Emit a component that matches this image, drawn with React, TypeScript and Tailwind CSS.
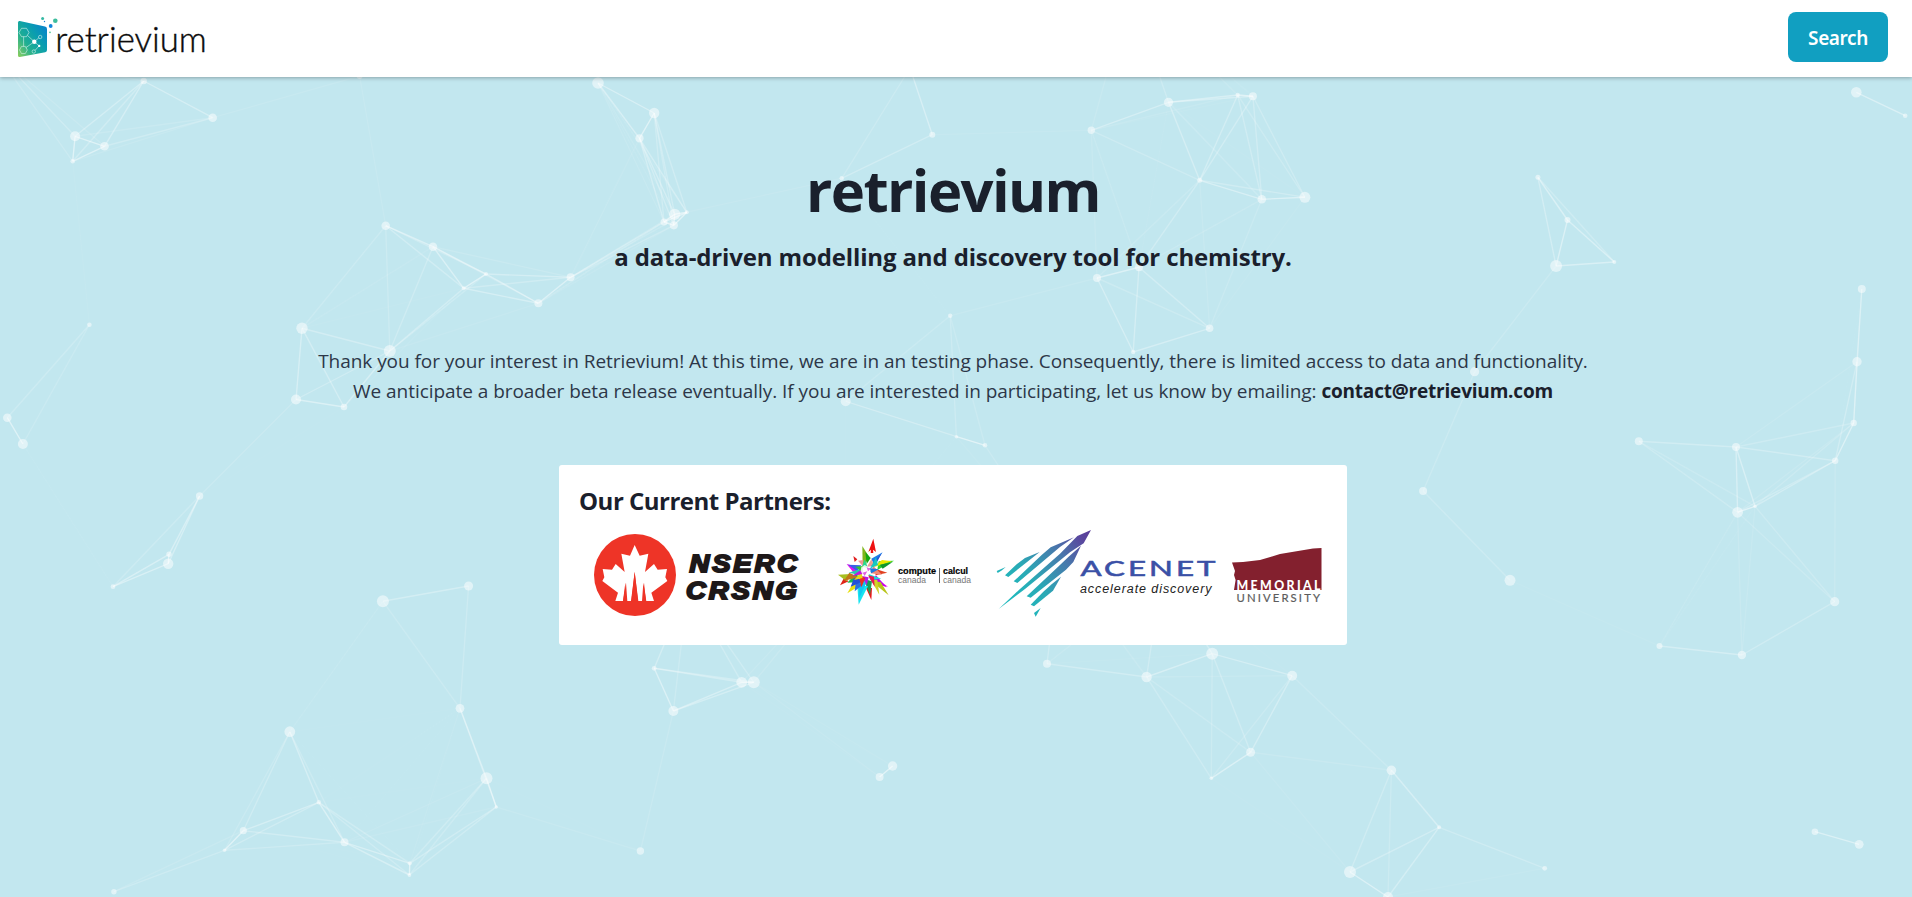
type Particle = [x: number, y: number, r: number];

const PARTICLES: Particle[] = [
  [-3, 54, 4], [359.6, 76, 3], [143.7, 81, 3.2], [212.7, 117.7, 4.3], [75.1, 136.3, 5], [104.5, 146.3, 4.3],
  [72.7, 161.3, 2.3], [89.4, 324.7, 2.3], [7.3, 417.7, 4.3], [22.9, 444, 5], [385.7, 225.7, 4.3],
  [433, 246.7, 4.3], [486, 274, 2], [463.7, 288.3, 2], [570.6, 277.3, 4], [538.4, 303.3, 4],
  [302, 328.2, 5.7], [389.8, 351, 6], [296, 399.5, 5], [344, 407, 3.3], [598, 83, 5.8],
  [654.2, 113, 5.2], [639.5, 138.3, 4.1], [674.7, 214.3, 5.6], [664, 222, 3.5], [673.8, 225.3, 4.1],
  [686.8, 212.3, 2], [841.7, 178.3, 2.2], [932.3, 134.7, 3], [910, 68, 3], [1091.3, 130.3, 3.7],
  [1130, -10, 3], [1168.5, 102.3, 4.6], [1237.7, 95, 2.2], [1252.9, 96.3, 4], [1199.7, 180.3, 2.5],
  [1261.8, 199.3, 4.3], [1304.9, 197.3, 5.5], [950.2, 315.7, 2.2], [1097, 278, 4], [1139, 267.3, 4],
  [1209.6, 328.3, 3.8], [1133.2, 352, 2.2], [845.7, 401.3, 5], [956.4, 436.7, 1.8], [985, 445.3, 2.3],
  [844, 572, 4], [688, 588, 4], [1060, 559, 4], [1162, 573, 4], [654.2, 668.3, 2.4],
  [741.7, 682.3, 5.4], [753.8, 682.3, 6], [673.4, 711, 5], [892.6, 766, 4.7], [879.6, 777, 4],
  [640.4, 851, 3.7], [1047, 663.7, 4], [1146.6, 677, 5.2], [1212.2, 653.7, 6], [1250.6, 752.3, 4.5],
  [1211.3, 778.3, 1.8], [1292.2, 675.7, 5], [1856.3, 92.3, 5.3], [1905.2, 115.7, 2.3], [1537.9, 177.3, 2.5],
  [1567.5, 220, 3], [1556.1, 266, 6], [1614.3, 262, 2], [1474.6, 371.7, 4.6], [1861.8, 289, 4],
  [1857, 361.7, 4.7], [1853.7, 423, 3.2], [1638.8, 441.3, 4], [1736, 447, 4], [1835.2, 460.7, 3.2],
  [1423.1, 491, 4], [1510, 580.3, 5.5], [1737.6, 512.3, 5.4], [1755, 506.3, 1.8], [1834.7, 601.7, 4.6],
  [1659.5, 646, 3], [1741.9, 655, 4.2], [1391.4, 770.3, 4.8], [1439.1, 827.3, 2], [1544.7, 868.3, 2.4],
  [1350, 872, 6], [1388, 897, 5], [1814.9, 831.7, 3.3], [1859.2, 844.3, 4.4], [199.6, 496, 3.7],
  [169, 554.3, 2.7], [168.2, 563.7, 5.2], [113, 586.7, 2.4], [382.9, 601.3, 6], [468.6, 586, 4.5],
  [460, 708.3, 4.4], [289.8, 731.7, 5.4], [486.5, 778.3, 6], [496.3, 807, 1.7], [318.8, 802.3, 2.2],
  [243.3, 830.7, 3.6], [344.5, 842.3, 4], [224.5, 850.3, 1.8], [409.8, 863.3, 2.1], [409.4, 875, 1.9],
  [113.9, 891.7, 2.7],
];

const LINK_DISTANCE = 180;

const LINKS = PARTICLES.flatMap((a, i) =>
  PARTICLES.slice(i + 1).flatMap((b) => {
    const d = Math.hypot(a[0] - b[0], a[1] - b[1]);
    return d < LINK_DISTANCE ? [{ a, b, opacity: 0.56 * (1 - d / LINK_DISTANCE) }] : [];
  }),
);

function ParticleField() {
  return (
    <svg className="absolute inset-0" width="1912" height="897" viewBox="0 0 1912 897" stroke="#fff" fill="#fff">
      <g stroke="none" fillOpacity="0.5">
        {PARTICLES.map(([x, y, r], i) => (
          <circle key={i} cx={x} cy={y} r={r} />
        ))}
      </g>
      {LINKS.map(({ a, b, opacity }, i) => (
        <line key={i} x1={a[0]} y1={a[1]} x2={b[0]} y2={b[1]} strokeWidth="1.4" strokeOpacity={opacity} />
      ))}
    </svg>
  );
}

function RetrieviumLogo() {
  return (
    <svg width="220" height="64" viewBox="10 7 220 64" className="overflow-visible">
      <defs>
        <linearGradient id="cube" x1="0" y1="1" x2="1" y2="0.1">
          <stop offset="0" stopColor="#8fcf5c" />
          <stop offset="0.35" stopColor="#1fae92" />
          <stop offset="0.65" stopColor="#0a9db0" />
          <stop offset="1" stopColor="#087fd0" />
        </linearGradient>
      </defs>
      <path d="M18 22.6Q18 20.8 19.8 21.1L45 26.6Q47 27.1 47 29V50Q47 51.8 45.2 52.2L19.8 57Q18 57.2 18 55.4Z" fill="url(#cube)" />
      <g fill="none" stroke="#d9f3ee" strokeWidth="0.6">
        <path d="M21.5 28.3h5l2.5 4.2-2.5 4.2h-5L19 32.5z" />
        <path d="M21.5 46.4h3.8l2 3.6-2 3.6h-3.8l-2-3.6z" />
        <path d="M23.6 36.7v9.7M27.5 35.5l6.8 6.2-8.5 6M34.3 41.7l4.5-3.8M34.3 41.7l4.9 4.2-4.2 4.5" />
        <circle cx="40.2" cy="37" r="1.7" />
        <circle cx="33.8" cy="51.5" r="1.7" />
      </g>
      <circle cx="34.3" cy="41.7" r="2.2" fill="#fff" />
      <circle cx="39.2" cy="45.9" r="1.2" fill="#fff" />
      <circle cx="42.6" cy="18.4" r="1.5" fill="#35b9a4" />
      <circle cx="44.5" cy="21.5" r="0.7" fill="#1682d8" />
      <circle cx="55.3" cy="20.8" r="2.3" fill="#3dbd9d" />
      <circle cx="50.7" cy="26" r="1.9" fill="#1286dc" />
      <circle cx="50" cy="32.3" r="0.9" fill="#55c79b" />
      <text x="55.3" y="51.5" fontFamily="Lato, sans-serif" fontWeight="300" fontSize="36" textLength="151.5" lengthAdjust="spacingAndGlyphs" fill="#0b0b0b" stroke="#0b0b0b" strokeWidth="0.4">
        retrievium
      </text>
    </svg>
  );
}

function NsercLogo() {
  return (
    <svg width="212" height="96" viewBox="590 527 212 96" className="shrink-0">
      <circle cx="635" cy="575" r="41" fill="#ee3427" />
      <g transform="translate(590 530) scale(.33333)">
        <path
          fill="#fff"
          d="M134 45L149 77 175 71 165 126 192 102 203 119 231 117 226 142 232 153 184 188 192 213H168L162 158 159 213H145L134 126 123 213H109L106 158 99 213H76L84 188 37 153 43 142 38 117 66 119 77 102 104 126 94 71 120 77Z"
        />
        <path fill="#ee3427" d="M134 125L144 214H124ZM108 158L112 214H99ZM160 158L169 214H156Z" />
      </g>
      <g
        fontFamily="'Liberation Sans', Arial, sans-serif"
        fontWeight="700"
        fontStyle="italic"
        fontSize="24.5"
        fill="#1d1819"
        stroke="#1d1819"
        strokeWidth="2"
      >
        <text transform="translate(689.5 571.8) scale(1.12 1)" textLength="96" lengthAdjust="spacing">NSERC</text>
        <text transform="translate(686 598.6) scale(1.12 1)" textLength="99" lengthAdjust="spacing">CRSNG</text>
      </g>
    </svg>
  );
}

const SPIKES: [points: string, color: string][] = [
  ["91,42 112,76 92,104", "#7fb51c"],
  ["100,60 116,78 104,96", "#12a812"],
  ["152,61 118,80 126,98", "#1b7fe8"],
  ["150,62 132,96 112,104", "#2456d8"],
  ["186,86 140,88 136,114", "#27d427"],
  ["180,88 150,84 124,106", "#e8e800"],
  ["182,90 152,110 144,98", "#12962e"],
  ["166,122 134,112 130,130", "#e04020"],
  ["150,128 124,102 116,124", "#f08878"],
  ["168,164 128,136 142,160", "#e818e8"],
  ["164,166 132,130 120,148", "#c400f0"],
  ["170,190 118,148 146,150", "#b8c41a"],
  ["142,188 116,142 136,144", "#d0d428"],
  ["118,204 102,168 120,168", "#e81818"],
  ["114,188 94,140 120,148", "#18a058"],
  ["80,218 76,162 108,162", "#18e4f0"],
  ["82,198 80,146 106,146", "#10c8f0"],
  ["46,184 68,144 82,162", "#e8e010"],
  ["68,178 72,148 92,158", "#2a70e0"],
  ["24,160 36,138 50,148", "#e02418"],
  ["46,152 74,122 84,150", "#18b850"],
  ["56,164 68,132 94,148", "#2050d8"],
  ["18,128 56,126 44,148", "#a8c020"],
  ["36,146 52,122 80,136", "#c07818"],
  ["44,96 80,106 68,126", "#e010f0"],
  ["48,98 88,100 76,118", "#3860e8"],
  ["50,122 86,110 86,130", "#28c8b0"],
  ["64,72 76,82 68,90", "#e02020"],
  ["78,86 94,84 94,104", "#f09898"],
  ["98,82 108,108 90,104", "#28d890"],
  ["118,82 126,98 104,106", "#f0a090"],
  ["132,76 138,98 114,110", "#18c8c0"],
  ["140,112 110,108 118,124", "#1878e0"],
  ["148,140 110,126 114,144", "#18d8d8"],
  ["128,164 108,130 126,134", "#e81850"],
  ["104,160 90,132 110,136", "#b818e8"],
  ["88,166 80,130 100,138", "#e83020"],
  ["66,144 88,120 92,138", "#e8d818"],
  ["60,132 92,110 92,126", "#c018e0"],
  ["70,104 96,102 88,118", "#30c830"],
];

function ComputeCanadaLogo() {
  return (
    <svg width="139" height="96" viewBox="836 527 139 96" className="shrink-0">
      <g transform="translate(832 532) scale(.33333)">
        {SPIKES.map(([points, color]) => (
          <polygon key={points} points={points} fill={color} />
        ))}
        <path d="M88 106l10-7 10 5 8 10-4 12-11 6-10-6-5-9z" fill="#fff" fillOpacity=".85" />
        <path d="M92 122l14-4-8 14zM104 106l12 4-8 8z" fill="#e060e0" />
        <path d="M124 20L132 60 123 53 124 63H116L117 53 109 60Z" fill="#ee1111" />
      </g>
      <g fontFamily="'Liberation Sans', Arial, sans-serif" fontSize="8.5">
        <text x="898" y="574.3" fontWeight="700" textLength="38" lengthAdjust="spacingAndGlyphs" fill="#000" stroke="#000" strokeWidth="0.2">compute</text>
        <text x="898" y="582.8" textLength="28" lengthAdjust="spacingAndGlyphs" fill="#777">canada</text>
        <text x="943" y="574.3" fontWeight="700" textLength="25" lengthAdjust="spacingAndGlyphs" fill="#000" stroke="#000" strokeWidth="0.2">calcul</text>
        <text x="943" y="582.8" textLength="28" lengthAdjust="spacingAndGlyphs" fill="#777">canada</text>
      </g>
      <rect x="939" y="568" width="0.9" height="15" fill="#555" />
    </svg>
  );
}

function AcenetLogo() {
  return (
    <svg width="224" height="96" viewBox="994 527 224 96" className="shrink-0">
      <defs>
        <linearGradient id="rocket" gradientUnits="userSpaceOnUse" x1="150" y1="430" x2="385" y2="235">
          <stop offset="0" stopColor="#1fb9bd" />
          <stop offset="0.3" stopColor="#2aa9b5" />
          <stop offset="0.65" stopColor="#4779ac" />
          <stop offset="0.9" stopColor="#59499f" />
          <stop offset="1" stopColor="#5a3f99" />
        </linearGradient>
      </defs>
      <g transform="translate(960 455) scale(.33333)" fill="url(#rocket)">
        <path d="M110 348L137 336 126 346 113 354Z" />
        <path d="M135 361L170 328 195 309 239 291 205 318 145 366Z" />
        <path d="M161 379L245 300 272 277 342 247 300 276 172 384Z" />
        <path d="M116 462L180 402 300 296 352 243 393 225 371 265 330 292 195 402Z" />
        <path d="M200 424L296 334 325 306 363 272 340 321 318 344 212 428Z" />
        <path d="M212 449L250 410 275 388 303 365 279 407 222 454Z" />
        <path d="M222 474L242 459 227 485Z" />
      </g>
      <text
        transform="translate(1080.5 576) scale(1.42 1)"
        fontFamily="Lato, sans-serif"
        fontWeight="400"
        fontSize="22"
        textLength="95"
        lengthAdjust="spacing"
        fill="#3a50a6"
        stroke="#3a50a6"
        strokeWidth="0.6"
      >
        ACENET
      </text>
      <text x="1080" y="593" fontFamily="'Liberation Sans', Arial, sans-serif" fontStyle="italic" fontSize="12.5" textLength="131.5" fill="#222">accelerate discovery</text>
    </svg>
  );
}

function MemorialLogo() {
  return (
    <svg width="96" height="96" viewBox="1229 527 96 96" className="shrink-0">
      <path d="M1232 562.6L1243 562 1260 560 1272 556.5 1280 554 1313 548.5 1321.5 548V590H1234L1235.6 580 1234 575 1235 571Z" fill="#83202e" />
      <g fontFamily="Lato, sans-serif">
        <text x="1236.5" y="590.3" fontWeight="900" fontSize="12.3" textLength="84" lengthAdjust="spacing" fill="#fff">MEMORIAL</text>
        <text x="1236.5" y="601.8" fontWeight="400" fontSize="11.3" textLength="83.5" lengthAdjust="spacing" fill="#5c5c5c" stroke="#5c5c5c" strokeWidth="0.2">UNIVERSITY</text>
      </g>
    </svg>
  );
}

export default function App() {
  return (
    <div className="relative flex h-[897px] w-full flex-col overflow-hidden bg-[#c2e7ef] font-['Open_Sans','Noto_Sans',sans-serif] text-[#1a202c]">
      <ParticleField />
      <header className="relative flex h-[77px] shrink-0 items-center justify-between bg-white pr-6 pl-[10px] shadow-[0_1px_4px_rgba(0,0,0,0.3)]">
        <RetrieviumLogo />
        <button className="mb-[3px] h-[50px] w-[100px] rounded-lg bg-[#119fc1] pt-[2px] font-['Noto_Sans',sans-serif] text-[19px] font-semibold tracking-[-0.4px] text-white">
          Search
        </button>
      </header>
      <main className="relative flex flex-col items-center pr-[6px]">
        <h1 className="mt-[77px] text-[58px] leading-[72px] font-bold tracking-[-1.6px]">retrievium</h1>
        <p className="mt-[15px] text-2xl leading-8 font-bold tracking-[-0.14px] whitespace-nowrap">
          a data-driven modelling and discovery tool for chemistry.
        </p>
        <div className="mt-[73px] flex flex-col items-center text-[19px] leading-[30px] tracking-[-0.05px] whitespace-nowrap text-[#2d3748]">
          <p>
            Thank you for your interest in Retrievium! At this time, we are in an testing phase. Consequently, there is
            limited access to data and functionality.
          </p>
          <p>
            We anticipate a broader beta release eventually. If you are interested in participating, let us know by
            emailing: <b className="font-bold tracking-[-0.2px] text-[#1a202c]">contact@retrievium.com</b>
          </p>
        </div>
        <section className="mt-[59px] h-[180px] w-[788px] rounded-[3px] bg-white px-5 pt-5">
          <h2 className="text-2xl leading-8 font-bold tracking-[-0.5px]">Our Current Partners:</h2>
          <div className="mt-[10px] flex pl-[11px]">
            <NsercLogo />
            <div className="w-[34px] shrink-0" />
            <ComputeCanadaLogo />
            <div className="w-[19px] shrink-0" />
            <AcenetLogo />
            <div className="w-[11px] shrink-0" />
            <MemorialLogo />
          </div>
        </section>
      </main>
    </div>
  );
}
